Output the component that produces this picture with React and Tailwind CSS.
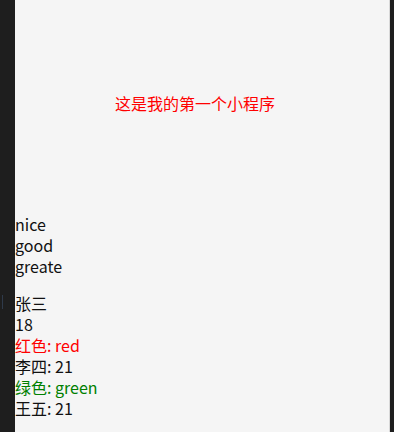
export default function App() {
    const people = [
        { text: "张三", color: "text-[#111]" },
        { text: "18", color: "text-[#111]" },
        { text: "红色: red", color: "text-[#f00]" },
        { text: "李四: 21", color: "text-[#111]" },
        { text: "绿色: green", color: "text-[#008000]" },
        { text: "王五: 21", color: "text-[#111]" },
    ]

    return (
        <div
            className="flex h-[432px] w-[394px] overflow-hidden bg-[#1e1e1e]"
            style={{ fontFamily: '"Noto Sans CJK SC", "Noto Sans", sans-serif' }}
        >
            {/* left panel edge */}
            <div className="relative w-[15px] shrink-0 bg-[#1e1e1e]">
                <div className="absolute left-[2px] top-[295px] h-[14px] w-[1px] bg-[#2f3a4a]" />
            </div>

            {/* simulator page */}
            <div className="flex w-[374px] shrink-0 flex-col bg-[#f5f5f5] text-[16px] leading-[21px] text-[#111]">
                <div className="flex h-[206px] w-[360px] items-center justify-center">
                    <span className="text-[#f00]">这是我的第一个小程序</span>
                </div>

                <div className="mt-2 flex flex-col">
                    <span>nice</span>
                    <span>good</span>
                    <span>greate</span>
                </div>

                <div className="mt-4 flex flex-col">
                    {people.map((p, i) => (
                        <span key={i} className={p.color}>{p.text}</span>
                    ))}
                </div>
            </div>

            <div className="w-[1px] shrink-0 bg-[#d8d8d8]" />
            <div className="flex-1 bg-[#1e1e1e]" />
        </div>
    )
}
